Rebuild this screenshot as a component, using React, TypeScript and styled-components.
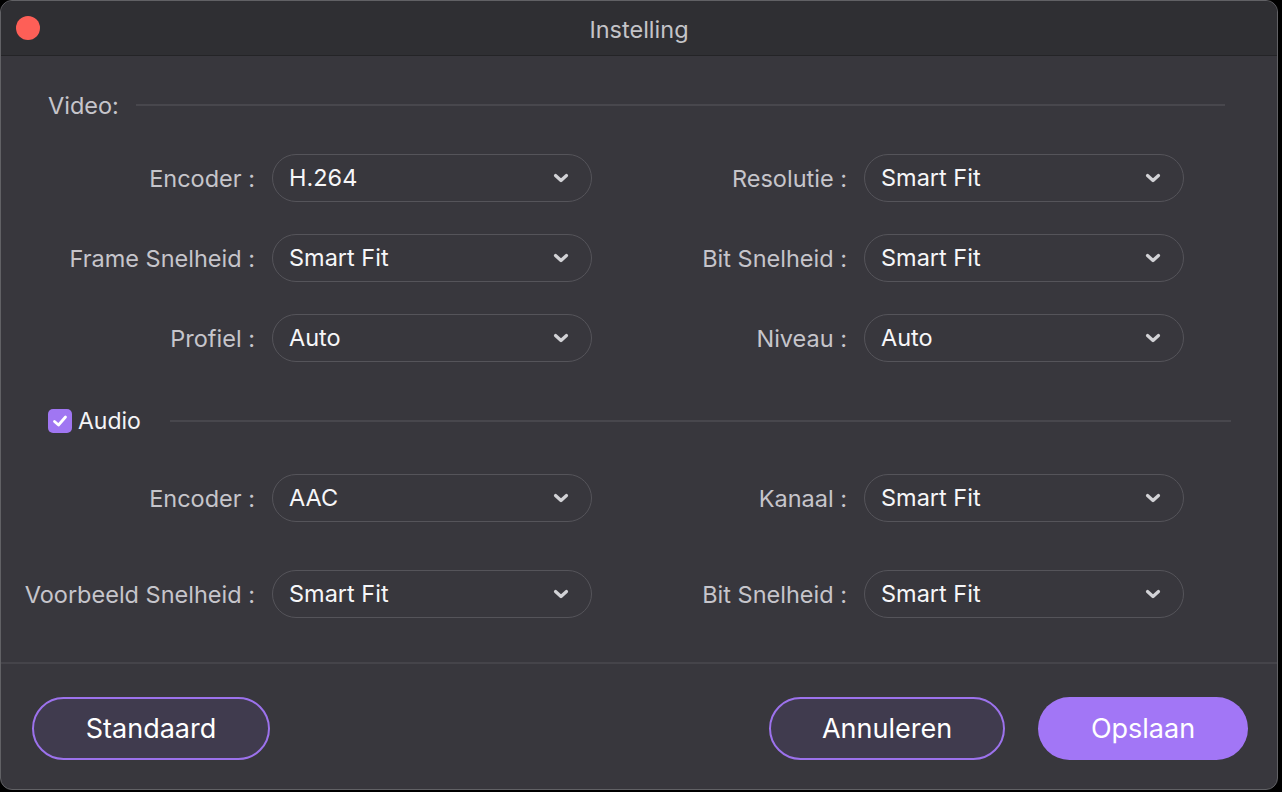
import React, { useState } from 'react';
import styled, { createGlobalStyle } from 'styled-components';

const GlobalStyle = createGlobalStyle`
  html, body {
    margin: 0;
    padding: 0;
    background: #000;
    font-family: Inter, "Noto Sans", "DejaVu Sans", sans-serif;
  }
`;

interface FieldData {
  label: string;
  value: string;
}

const videoFields: FieldData[] = [
  { label: 'Encoder :', value: 'H.264' },
  { label: 'Resolutie :', value: 'Smart Fit' },
  { label: 'Frame Snelheid :', value: 'Smart Fit' },
  { label: 'Bit Snelheid :', value: 'Smart Fit' },
  { label: 'Profiel :', value: 'Auto' },
  { label: 'Niveau :', value: 'Auto' },
];

const audioFields: FieldData[] = [
  { label: 'Encoder :', value: 'AAC' },
  { label: 'Kanaal :', value: 'Smart Fit' },
  { label: 'Voorbeeld Snelheid :', value: 'Smart Fit' },
  { label: 'Bit Snelheid :', value: 'Smart Fit' },
];

const Chevron: React.FC = () => (
  <svg width="16" height="10" viewBox="0 0 16 10">
    <path d="M2.5 2.5 L8 7.5 L13.5 2.5" fill="none" stroke="#d2d2d6" strokeWidth="3.2" strokeLinecap="round" strokeLinejoin="round" />
  </svg>
);

const Field: React.FC<{ field: FieldData }> = ({ field }) => (
  <>
    <Label>{field.label}</Label>
    <Select>
      <span>{field.value}</span>
      <Chevron />
    </Select>
  </>
);

const App: React.FC = () => {
  const [audio, setAudio] = useState(true);

  return (
    <>
      <GlobalStyle />
      <Window>
        <TitleBar>
          <CloseDot />
          <Title>Instelling</Title>
        </TitleBar>
        <Body>
          <SectionHeader $top={34}>
            <HeaderText>Video:</HeaderText>
            <Rule $left={17} $right={52} />
          </SectionHeader>
          <FieldGrid $top={34} $gap={32}>
            {videoFields.map((f, i) => (
              <Field key={i} field={f} />
            ))}
          </FieldGrid>
          <SectionHeader $top={44}>
            <CheckBox $checked={audio} onClick={() => setAudio(!audio)}>
              <svg width="16" height="14" viewBox="0 0 16 14">
                <path d="M2.5 7.5 L6.5 11 L13.5 3" fill="none" stroke="#fff" strokeWidth="2.8" strokeLinecap="round" strokeLinejoin="round" />
              </svg>
            </CheckBox>
            <HeaderText $bright>Audio</HeaderText>
            <Rule $left={29} $right={46} />
          </SectionHeader>
          <FieldGrid $top={38} $gap={48}>
            {audioFields.map((f, i) => (
              <Field key={i} field={f} />
            ))}
          </FieldGrid>
        </Body>
        <Footer>
          <OutlineButton $width={238}>Standaard</OutlineButton>
          <Spacer />
          <OutlineButton $width={236}>Annuleren</OutlineButton>
          <PrimaryButton>Opslaan</PrimaryButton>
        </Footer>
      </Window>
    </>
  );
};

const Window = styled.div`
  width: 1278px;
  height: 790px;
  box-sizing: border-box;
  border: 1px solid #616165;
  border-radius: 12px;
  overflow: hidden;
  background: #38373d;
  display: flex;
  flex-direction: column;
`;

const TitleBar = styled.div`
  height: 54px;
  flex-shrink: 0;
  position: relative;
  display: flex;
  align-items: center;
  justify-content: center;
  background: #2f2f33;
  border-bottom: 1px solid #242427;
`;

const CloseDot = styled.div`
  position: absolute;
  left: 15px;
  top: 15px;
  width: 24px;
  height: 24px;
  border-radius: 50%;
  background: #fe5f57;
`;

const Title = styled.div`
  font-size: 23.5px;
  color: #c4c4c8;
  margin-top: 2px;
`;

const Body = styled.div`
  height: 608px;
  flex-shrink: 0;
  box-sizing: border-box;
  border-bottom: 2px solid #45444a;
`;

const SectionHeader = styled.div<{ $top: number }>`
  display: flex;
  align-items: center;
  height: 30px;
  margin-top: ${({ $top }) => $top}px;
  padding-left: 47px;
`;

const HeaderText = styled.div<{ $bright?: boolean }>`
  font-size: ${({ $bright }) => ($bright ? '23px' : '23.5px')};
  color: ${({ $bright }) => ($bright ? '#f4f4f6' : '#c6c5cb')};
  margin-left: ${({ $bright }) => ($bright ? '6px' : '0')};
`;

const Rule = styled.div<{ $left: number; $right: number }>`
  flex: 1;
  height: 2px;
  background: #48474d;
  margin-left: ${({ $left }) => $left}px;
  margin-right: ${({ $right }) => $right}px;
`;

const CheckBox = styled.div<{ $checked: boolean }>`
  width: 24px;
  height: 24px;
  border-radius: 5px;
  background: ${({ $checked }) => ($checked ? '#a076f2' : 'transparent')};
  display: flex;
  align-items: center;
  justify-content: center;
  cursor: pointer;
  svg {
    visibility: ${({ $checked }) => ($checked ? 'visible' : 'hidden')};
  }
`;

const FieldGrid = styled.div<{ $top: number; $gap: number }>`
  display: grid;
  grid-template-columns: 271px 320px 272px 320px;
  row-gap: ${({ $gap }) => $gap}px;
  margin-top: ${({ $top }) => $top}px;
  align-items: center;
`;

const Label = styled.div`
  font-size: 23.5px;
  color: #c6c5cb;
  text-align: right;
  padding-right: 17px;
  white-space: nowrap;
`;

const Select = styled.div`
  height: 48px;
  box-sizing: border-box;
  border: 1.5px solid #55545a;
  border-radius: 24px;
  display: flex;
  align-items: center;
  justify-content: space-between;
  padding: 0 22px 1px 16px;
  font-size: 23.5px;
  color: #f6f6f8;
`;

const Footer = styled.div`
  flex: 1;
  display: flex;
  align-items: center;
  padding: 4px 29px 0 31px;
  gap: 33px;
`;

const Spacer = styled.div`
  flex: 1;
`;

const OutlineButton = styled.button<{ $width: number }>`
  width: ${({ $width }) => $width}px;
  height: 63px;
  border-radius: 32px;
  border: 2px solid #9c72ec;
  background: #403b4e;
  color: #fff;
  font-family: inherit;
  font-size: 27px;
  cursor: pointer;
`;

const PrimaryButton = styled.button`
  width: 210px;
  height: 63px;
  border-radius: 32px;
  border: none;
  background: #a276f6;
  color: #fff;
  font-family: inherit;
  font-size: 27px;
  cursor: pointer;
`;

export default App;
